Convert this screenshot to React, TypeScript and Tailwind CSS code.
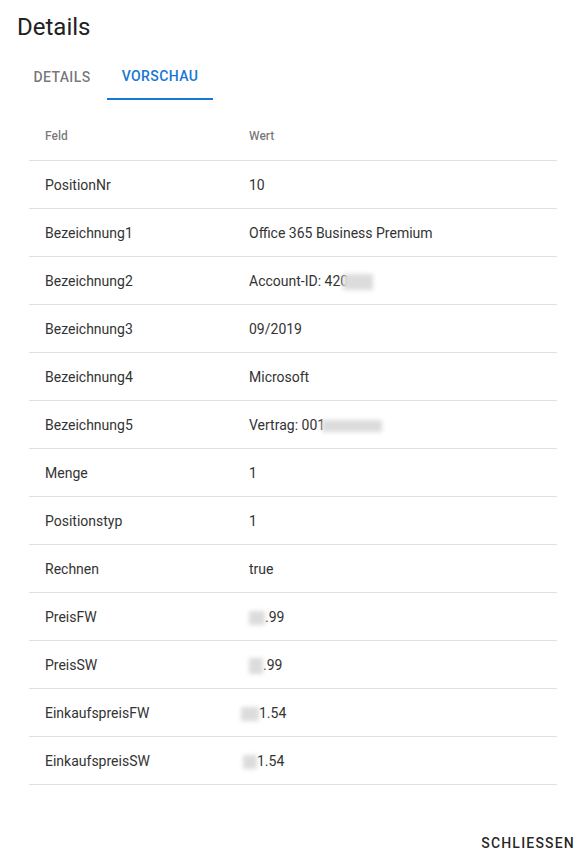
import { ReactNode } from "react";

type Row = { feld: string; wert: ReactNode };

const Blur = ({ w, h = 14, className = "" }: { w: number; h?: number; className?: string }) => (
  <span
    className={`inline-block align-middle bg-[#dcdcdc] blur-[2px] ${className}`}
    style={{ width: w, height: h }}
  />
);

const rows: Row[] = [
  { feld: "PositionNr", wert: "10" },
  { feld: "Bezeichnung1", wert: "Office 365 Business Premium" },
  {
    feld: "Bezeichnung2",
    wert: (
      <>
        Account-ID: 420
        <Blur w={30} h={16} className="-ml-[5px]" />
      </>
    ),
  },
  { feld: "Bezeichnung3", wert: "09/2019" },
  { feld: "Bezeichnung4", wert: "Microsoft" },
  {
    feld: "Bezeichnung5",
    wert: (
      <>
        Vertrag: 001
        <Blur w={60} h={12} className="-ml-[3px]" />
      </>
    ),
  },
  { feld: "Menge", wert: "1" },
  { feld: "Positionstyp", wert: "1" },
  { feld: "Rechnen", wert: "true" },
  {
    feld: "PreisFW",
    wert: (
      <>
        <Blur w={16} />
        .99
      </>
    ),
  },
  {
    feld: "PreisSW",
    wert: (
      <>
        <Blur w={14} h={16} />
        .99
      </>
    ),
  },
  {
    feld: "EinkaufspreisFW",
    wert: (
      <span className="-ml-[8px]">
        <Blur w={18} />
        1.54
      </span>
    ),
  },
  {
    feld: "EinkaufspreisSW",
    wert: (
      <span className="-ml-[6px]">
        <Blur w={14} />
        1.54
      </span>
    ),
  },
];

const App = () => {
  return (
    <div className="w-[581px] h-[857px] bg-white overflow-hidden font-['Roboto',sans-serif] text-[#333]">
      <div className="h-[52px] pl-[17px] pt-[2px] flex items-center">
        <h2 className="text-[24px] leading-8 font-normal text-[#212121]">Details</h2>
      </div>

      <div className="pl-[17px] flex">
        <div className="w-[90px] h-[48px] pt-[2px] flex items-center justify-center text-sm font-medium uppercase tracking-[0.4px] text-[rgba(0,0,0,0.55)]">
          Details
        </div>
        <div className="w-[106px] h-[48px] pt-[2px] flex items-center justify-center text-sm font-medium uppercase tracking-[0.4px] text-[#1976d2] border-b-2 border-[#1976d2]">
          Vorschau
        </div>
      </div>

      <div className="mt-[5px] ml-[29px] w-[528px]">
        <div className="h-[56px] pt-[6px] flex items-center border-b border-[#e0e0e0] text-xs font-medium text-[rgba(0,0,0,0.54)]">
          <div className="w-[204px] pl-4">Feld</div>
          <div className="pl-4">Wert</div>
        </div>
        {rows.map((r) => (
          <div key={r.feld} className="h-[48px] flex items-center border-b border-[#e0e0e0] text-sm">
            <div className="w-[204px] pl-4">{r.feld}</div>
            <div className="pl-4 whitespace-nowrap">{r.wert}</div>
          </div>
        ))}
      </div>

      <div className="flex justify-end pt-[40px]">
        <button className="pl-2 pr-[6px] h-9 text-sm font-medium uppercase tracking-[1.2px] text-[rgba(0,0,0,0.87)]">
          Schliessen
        </button>
      </div>
    </div>
  );
};

export default App;
